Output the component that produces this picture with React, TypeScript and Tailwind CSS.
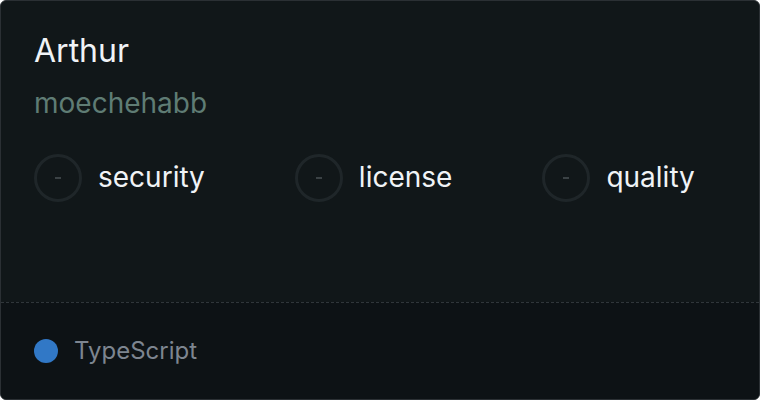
const badges = ["security", "license", "quality"];

const Badge = ({ label }: { label: string }) => (
  <div className="flex items-center gap-4">
    <div className="flex h-[48px] w-[48px] items-center justify-center rounded-full border-[3px] border-[#1f2629]">
      <span className="block h-[2px] w-[6px] bg-[#3b4245]"></span>
    </div>
    <span className="pb-[3px] text-[28px] leading-[36px] text-[#f0f3f6]">{label}</span>
  </div>
);

export default function App() {
  return (
    <div
      className="flex h-[400px] w-[760px] flex-col overflow-hidden rounded-[6px] border border-[#2b3034] bg-[#111719]"
      style={{ fontFamily: "Inter, 'Noto Sans', sans-serif" }}
    >
      <div className="flex flex-1 flex-col px-[33px] pt-[28px]">
        <h1 className="text-[32px] leading-[44px] text-[#f0f3f6]">Arthur</h1>
        <p className="mt-[12px] text-[28px] leading-[36px] text-[#5f7c74]">moechehabb</p>
        <div className="mt-[33px] flex items-center gap-[90px]">
          {badges.map((b) => (
            <Badge key={b} label={b} />
          ))}
        </div>
      </div>
      <div className="flex h-[97px] items-center gap-[16px] border-t border-dashed border-[#30363a] bg-[#0d1215] px-[33px]">
        <span className="h-[24px] w-[24px] rounded-full bg-[#3178c6]"></span>
        <span className="text-[24px] text-[#7d8590]">TypeScript</span>
      </div>
    </div>
  );
}
